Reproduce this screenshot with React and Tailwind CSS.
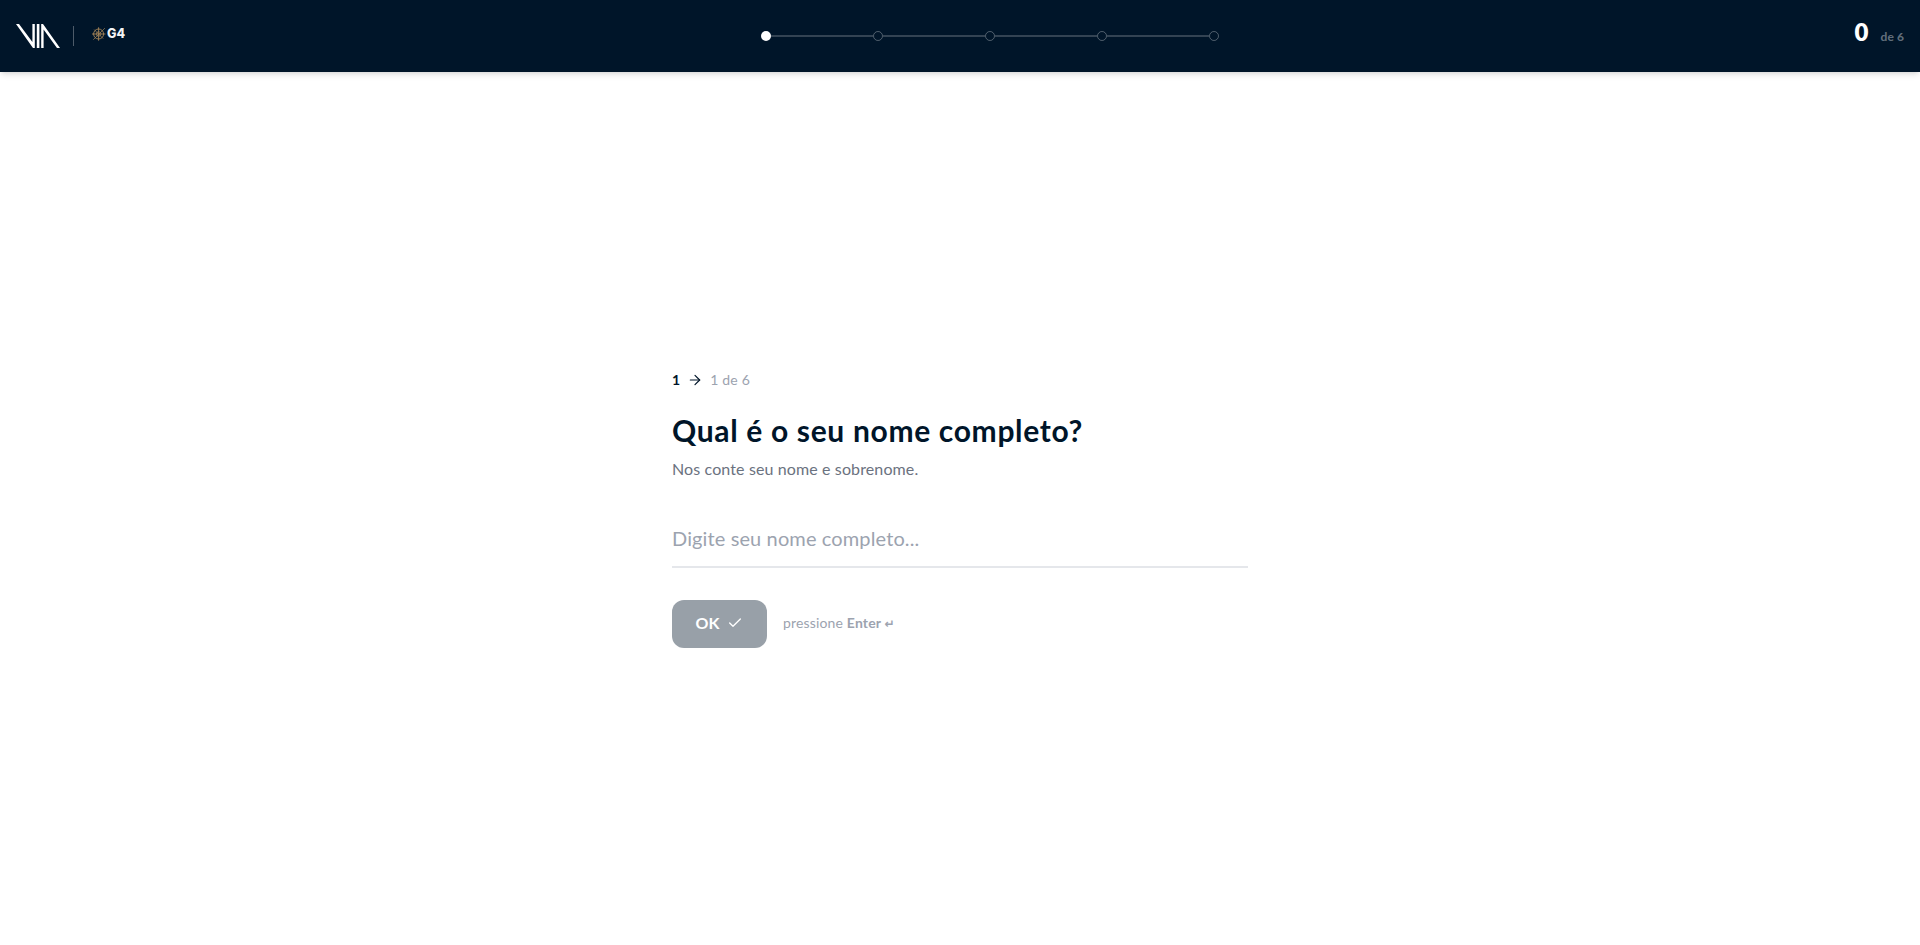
import React from "react";
import { ArrowRight, Check } from "lucide-react";

const steps = [1, 2, 3, 4, 5];

function ViaLogo() {
  return (
    <svg width="44" height="24" viewBox="0 0 44 24" fill="#fff">
      <path d="M0 0H3L16.4 18V0H18.8V24H17L0 0Z" />
      <path d="M20.8 0H23.4V24H20.8Z" />
      <path d="M25.2 0H27L44 24H41L27.6 5.4V24H25.2Z" />
    </svg>
  );
}

function G4Logo() {
  return (
    <div className="flex h-[14px] items-center gap-px">
      <svg width="14" height="14" viewBox="0 0 14 14" fill="none" stroke="#a58558" strokeWidth="0.9">
        <circle cx="6.6" cy="7" r="5" />
        <circle cx="6.6" cy="7" r="2.3" strokeWidth="0.7" />
        <path d="M6.6 0.3V13.7M0 7H13.4" />
        <path d="M1.3 12.7L12.9 1.1M2.2 2.6L11.2 11.6" strokeWidth="0.7" />
      </svg>
      <span className="pt-px font-[Inter,sans-serif] text-[12.5px] leading-none font-extrabold tracking-[0.2px] text-gray-100">G4</span>
    </div>
  );
}

export default function App() {
  return (
    <div className="flex min-h-screen flex-col bg-white font-[Lato,sans-serif] text-[#001529]">
      <header className="flex h-[72px] items-center justify-between bg-[#001529] px-4 shadow-md">
        <div className="flex w-[160px] items-center">
          <ViaLogo />
          <div className="ml-[13px] h-5 w-px bg-white/30" />
          <div className="mb-[5px] ml-[18px]">
            <G4Logo />
          </div>
        </div>

        <div className="ml-[60px] flex w-[458px] items-center">
          {steps.map((step) => (
            <React.Fragment key={step}>
              {step > 1 && <div className="h-0.5 flex-1 bg-white/20" />}
              <div
                className={
                  step === 1
                    ? "size-2.5 rounded-full bg-white"
                    : "size-2.5 rounded-full border border-white/30"
                }
              />
            </React.Fragment>
          ))}
        </div>

        <div className="mb-2 flex w-[160px] items-baseline justify-end gap-3">
          <span className="text-2xl leading-8 font-extrabold text-white">0</span>
          <span className="text-xs font-bold tracking-[0.1px] text-white/40">de 6</span>
        </div>
      </header>

      <main className="flex flex-1 items-center justify-center">
        <div className="w-full max-w-xl">
          <div className="mb-[21px] flex items-center gap-2 text-sm">
            <span className="-mr-px pb-px font-bold">1</span>
            <ArrowRight size={16} strokeWidth={1.8} />
            <span className="-ml-px pb-px tracking-[0.2px] text-[#9ca3af]">1 de 6</span>
          </div>

          <h1 className="mb-[9px] text-3xl font-bold tracking-[0.67px]">Qual é o seu nome completo?</h1>
          <p className="mb-[33px] text-base tracking-[0.12px] text-[#6b7280]">Nos conte seu nome e sobrenome.</p>

          <input
            type="text"
            placeholder="Digite seu nome completo..."
            className="block h-[54px] w-full border-b-2 border-[#e5e7eb] bg-transparent pb-[3px] text-xl tracking-[0.12px] outline-none placeholder:text-[#9ca3af]"
          />

          <div className="mt-8 flex items-center gap-4">
            <button
              disabled
              className="flex h-12 w-[95px] items-center justify-center gap-2 rounded-xl bg-[#001529] pb-px font-bold text-white opacity-40"
            >
              OK
              <Check size={16} />
            </button>
            <span className="pb-0.5 text-sm tracking-[0.16px] text-[#9ca3af]">
              pressione <strong>Enter <span className="font-['DejaVu_Sans',sans-serif] text-xs">↵</span></strong>
            </span>
          </div>
        </div>
      </main>
    </div>
  );
}
